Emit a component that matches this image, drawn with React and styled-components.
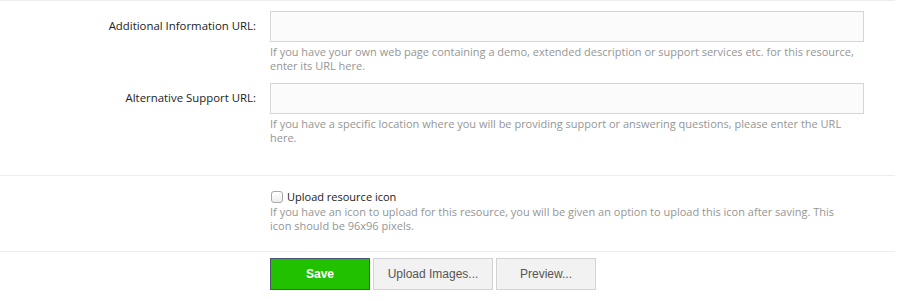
import React from "react";
import styled, { createGlobalStyle } from "styled-components";

const GlobalStyle = createGlobalStyle`
  html, body {
    margin: 0;
    padding: 0;
    background: #fff;
  }
  body {
    font-family: "Open Sans", "Liberation Sans", sans-serif;
  }
`;

const Page = styled.div`
  width: 895px;
`;

const Section = styled.div`
  border-top: 1px solid #ededed;
  padding: ${props => props.$pad || "10px 0"};
  display: flex;
  flex-direction: column;
  gap: ${props => props.$gap || "0"};
`;

const Row = styled.div`
  display: grid;
  grid-template-columns: 256px 594px;
  column-gap: 14px;
`;

const Label = styled.label`
  font-size: 11.4px;
  color: #222;
  text-align: right;
  line-height: 30px;
`;

const Field = styled.div`
  display: flex;
  flex-direction: column;
`;

const TextInput = styled.input`
  box-sizing: border-box;
  width: 594px;
  height: 31px;
  border: 1px solid #d6d6d6;
  background: #fbfbfb;
  margin: 0;
  padding: 4px 6px;
  font: inherit;
  outline: none;
`;

const Hint = styled.p`
  margin: ${props => props.$top || "3px"} 0 0;
  max-width: 584px;
  font-size: 11px;
  line-height: 14px;
  color: #959595;
`;

const CheckLine = styled.label`
  display: flex;
  align-items: center;
  gap: 4px;
  font-size: 11px;
  color: #1a1a1a;
  line-height: 14px;
`;

const Box = styled.span`
  box-sizing: border-box;
  width: 12px;
  height: 12px;
  border: 1px solid #a8a8a8;
  border-radius: 3px;
  background: linear-gradient(#fff, #ededed);
  margin-left: 1px;
`;

const Buttons = styled.div`
  display: flex;
  gap: 3px;
`;

const Button = styled.button`
  box-sizing: border-box;
  height: 32px;
  width: ${props => props.$w};
  margin: 0;
  padding: 0;
  font-family: "Liberation Sans", Arial, sans-serif;
  font-size: 12px;
  font-weight: ${props => (props.$primary ? "bold" : "normal")};
  color: ${props => (props.$primary ? "#fff" : "#555")};
  background: ${props => (props.$primary ? "#22c100" : "#f2f2f2")};
  border: 1px solid ${props => (props.$primary ? "#4b5573" : "#d3d3d3")};
  cursor: pointer;
`;

export default function App() {
  return (
    <Page>
      <GlobalStyle />
      <Section $pad="10px 0 30px" $gap="10px">
        <Row>
          <Label>Additional Information URL:</Label>
          <Field>
            <TextInput type="text" />
            <Hint>
              If you have your own web page containing a demo, extended description or support services etc. for this resource,
              enter its URL here.
            </Hint>
          </Field>
        </Row>
        <Row>
          <Label>Alternative Support URL:</Label>
          <Field>
            <TextInput type="text" />
            <Hint>
              If you have a specific location where you will be providing support or answering questions, please enter the URL
              here.
            </Hint>
          </Field>
        </Row>
      </Section>
      <Section $pad="14px 0 18px">
        <Row>
          <span />
          <Field>
            <CheckLine>
              <Box />
              Upload resource icon
            </CheckLine>
            <Hint $top="1px">
              If you have an icon to upload for this resource, you will be given an option to upload this icon after saving. This
              icon should be 96x96 pixels.
            </Hint>
          </Field>
        </Row>
      </Section>
      <Section $pad="6px 0">
        <Row>
          <span />
          <Buttons>
            <Button $primary $w="100px">Save</Button>
            <Button $w="120px">Upload Images...</Button>
            <Button $w="100px">Preview...</Button>
          </Buttons>
        </Row>
      </Section>
    </Page>
  );
}
